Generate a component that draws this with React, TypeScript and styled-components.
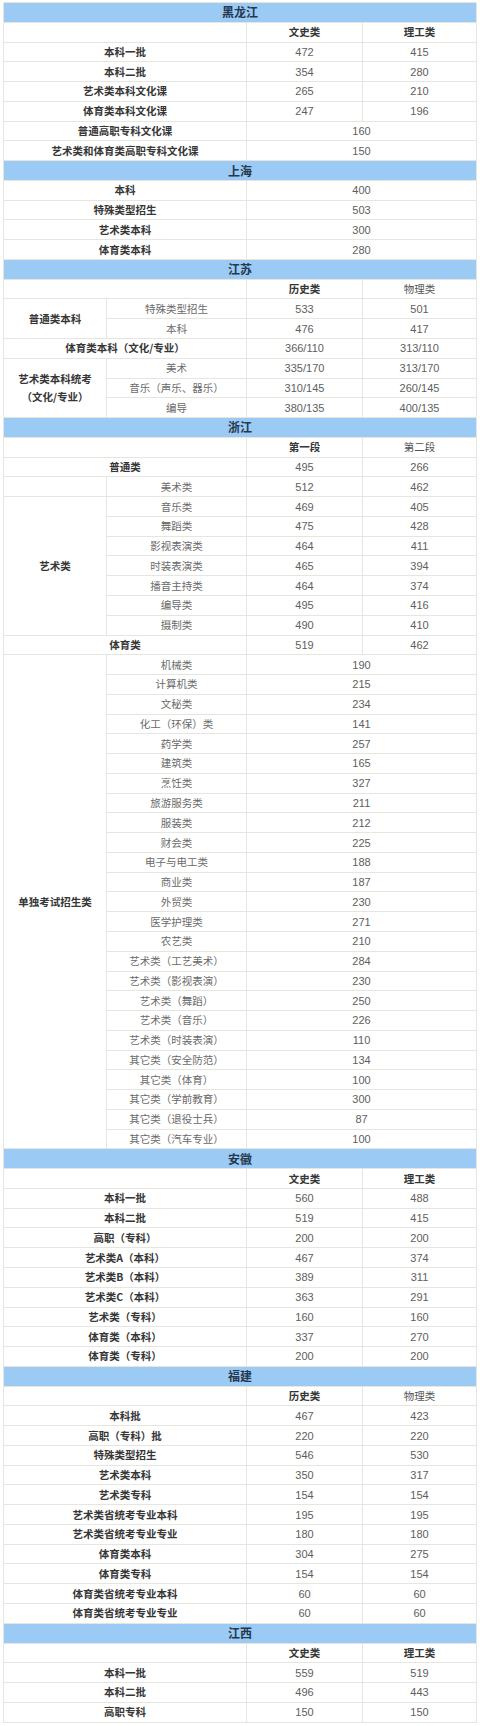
import * as React from "react";
import styled, { createGlobalStyle } from "styled-components";

const GlobalStyle = createGlobalStyle`
  body {
    margin: 0;
    background: #ffffff;
    font-family: "Noto Sans CJK SC", "Liberation Sans", sans-serif;
  }
`;

const Sheet = styled.div`
  display: grid;
  grid-template-columns: 102px 139px 115px 113px;
  grid-auto-rows: 18.77px;
  gap: 1px;
  padding: 1px;
  margin: 2px 0 0 3px;
  width: max-content;
  background: #e6e6de;
`;

const Cell = styled.div<{ $span?: number; $rows?: number }>`
  grid-column: span ${(p) => p.$span ?? 1};
  grid-row: span ${(p) => p.$rows ?? 1};
  display: flex;
  align-items: center;
  justify-content: center;
  text-align: center;
  background: #ffffff;
  font-size: 10.5px;
  line-height: 18px;
  white-space: nowrap;
`;

const Region = styled(Cell)`
  grid-column: 1 / -1;
  background: #9bcaf5;
  color: #25384d;
  font-size: 12px;
  font-weight: 700;
`;

const Label = styled(Cell)`
  color: #363636;
  font-weight: 700;
`;

const Sub = styled(Cell)`
  color: #6a6a6a;
`;

const Head = styled(Cell)<{ $plain?: boolean }>`
  color: ${(p) => (p.$plain ? "#555555" : "#363636")};
  font-weight: ${(p) => (p.$plain ? 400 : 700)};
`;

const Value = styled(Cell)`
  color: #5e5e5e;
  font-family: "Liberation Sans", sans-serif;
  font-size: 11px;
`;

type Row = [string, string, string?];

const ColHeads = ({ a, b, plainB }: { a: string; b: string; plainB?: boolean }) => (
  <>
    <Cell $span={2} />
    <Head>{a}</Head>
    <Head $plain={plainB}>{b}</Head>
  </>
);

// plain rows: label spans first two columns; one value spans both score columns
const Rows = ({ rows }: { rows: Row[] }) => (
  <>
    {rows.map(([label, a, b]) => (
      <React.Fragment key={label}>
        <Label $span={2}>{label}</Label>
        {b === undefined ? (
          <Value $span={2}>{a}</Value>
        ) : (
          <>
            <Value>{a}</Value>
            <Value>{b}</Value>
          </>
        )}
      </React.Fragment>
    ))}
  </>
);

const heilongjiang: Row[] = [
  ["本科一批", "472", "415"],
  ["本科二批", "354", "280"],
  ["艺术类本科文化课", "265", "210"],
  ["体育类本科文化课", "247", "196"],
  ["普通高职专科文化课", "160"],
  ["艺术类和体育类高职专科文化课", "150"],
];

const shanghai: Row[] = [
  ["本科", "400"],
  ["特殊类型招生", "503"],
  ["艺术类本科", "300"],
  ["体育类本科", "280"],
];

const zjArts: Row[] = [
  ["音乐类", "469", "405"],
  ["舞蹈类", "475", "428"],
  ["影视表演类", "464", "411"],
  ["时装表演类", "465", "394"],
  ["播音主持类", "464", "374"],
  ["编导类", "495", "416"],
  ["摄制类", "490", "410"],
];

const zjSolo: [string, string][] = [
  ["机械类", "190"],
  ["计算机类", "215"],
  ["文秘类", "234"],
  ["化工（环保）类", "141"],
  ["药学类", "257"],
  ["建筑类", "165"],
  ["烹饪类", "327"],
  ["旅游服务类", "211"],
  ["服装类", "212"],
  ["财会类", "225"],
  ["电子与电工类", "188"],
  ["商业类", "187"],
  ["外贸类", "230"],
  ["医学护理类", "271"],
  ["农艺类", "210"],
  ["艺术类（工艺美术）", "284"],
  ["艺术类（影视表演）", "230"],
  ["艺术类（舞蹈）", "250"],
  ["艺术类（音乐）", "226"],
  ["艺术类（时装表演）", "110"],
  ["其它类（安全防范）", "134"],
  ["其它类（体育）", "100"],
  ["其它类（学前教育）", "300"],
  ["其它类（退役士兵）", "87"],
  ["其它类（汽车专业）", "100"],
];

const anhui: Row[] = [
  ["本科一批", "560", "488"],
  ["本科二批", "519", "415"],
  ["高职（专科）", "200", "200"],
  ["艺术类A（本科）", "467", "374"],
  ["艺术类B（本科）", "389", "311"],
  ["艺术类C（本科）", "363", "291"],
  ["艺术类（专科）", "160", "160"],
  ["体育类（本科）", "337", "270"],
  ["体育类（专科）", "200", "200"],
];

const fujian: Row[] = [
  ["本科批", "467", "423"],
  ["高职（专科）批", "220", "220"],
  ["特殊类型招生", "546", "530"],
  ["艺术类本科", "350", "317"],
  ["艺术类专科", "154", "154"],
  ["艺术类省统考专业本科", "195", "195"],
  ["艺术类省统考专业专业", "180", "180"],
  ["体育类本科", "304", "275"],
  ["体育类专科", "154", "154"],
  ["体育类省统考专业本科", "60", "60"],
  ["体育类省统考专业专业", "60", "60"],
];

const jiangxi: Row[] = [
  ["本科一批", "559", "519"],
  ["本科二批", "496", "443"],
  ["高职专科", "150", "150"],
];

const App = () => (
  <>
    <GlobalStyle />
    <Sheet>
      <Region>黑龙江</Region>
      <ColHeads a="文史类" b="理工类" />
      <Rows rows={heilongjiang} />

      <Region>上海</Region>
      <Rows rows={shanghai} />

      <Region>江苏</Region>
      <ColHeads a="历史类" b="物理类" plainB />
      <Label $rows={2}>普通类本科</Label>
      <Sub>特殊类型招生</Sub>
      <Value>533</Value>
      <Value>501</Value>
      <Sub>本科</Sub>
      <Value>476</Value>
      <Value>417</Value>
      <Label $span={2}>体育类本科（文化/专业）</Label>
      <Value>366/110</Value>
      <Value>313/110</Value>
      <Label $rows={3}>
        艺术类本科统考
        <br />
        （文化/专业）
      </Label>
      <Sub>美术</Sub>
      <Value>335/170</Value>
      <Value>313/170</Value>
      <Sub>音乐（声乐、器乐）</Sub>
      <Value>310/145</Value>
      <Value>260/145</Value>
      <Sub>编导</Sub>
      <Value>380/135</Value>
      <Value>400/135</Value>

      <Region>浙江</Region>
      <ColHeads a="第一段" b="第二段" plainB />
      <Label $span={2}>普通类</Label>
      <Value>495</Value>
      <Value>266</Value>
      <Cell />
      <Sub>美术类</Sub>
      <Value>512</Value>
      <Value>462</Value>
      <Label $rows={zjArts.length}>艺术类</Label>
      {zjArts.map(([name, a, b]) => (
        <React.Fragment key={name}>
          <Sub>{name}</Sub>
          <Value>{a}</Value>
          <Value>{b}</Value>
        </React.Fragment>
      ))}
      <Label $span={2}>体育类</Label>
      <Value>519</Value>
      <Value>462</Value>
      <Label $rows={zjSolo.length}>单独考试招生类</Label>
      {zjSolo.map(([name, v]) => (
        <React.Fragment key={name}>
          <Sub>{name}</Sub>
          <Value $span={2}>{v}</Value>
        </React.Fragment>
      ))}

      <Region>安徽</Region>
      <ColHeads a="文史类" b="理工类" />
      <Rows rows={anhui} />

      <Region>福建</Region>
      <ColHeads a="历史类" b="物理类" plainB />
      <Rows rows={fujian} />

      <Region>江西</Region>
      <ColHeads a="文史类" b="理工类" />
      <Rows rows={jiangxi} />
    </Sheet>
  </>
);

export default App;
